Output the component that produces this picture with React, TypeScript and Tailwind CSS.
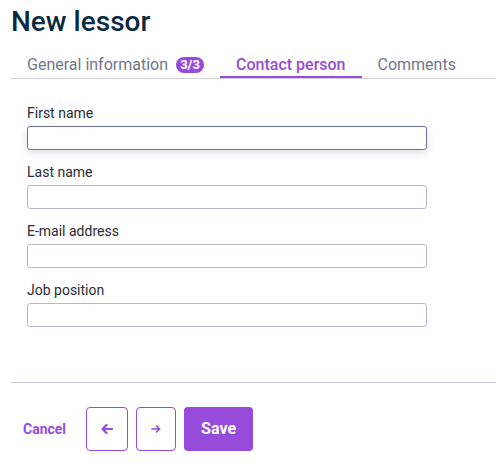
import { useState } from "react"

const fields = ["First name", "Last name", "E-mail address", "Job position"]

const Tab = ({ label, active, badge }: { label: string; active?: boolean; badge?: string }) => (
  <button
    className={`h-[26px] px-4 pt-px flex items-start border-b-2 text-[16px] leading-6 ${
      active ? "border-[#974bdb] text-[#974bdb] font-medium" : "border-transparent text-[#737587]"
    }`}
  >
    {label}
    {badge && (
      <span className="ml-2 mt-[4px] h-4 w-[28px] text-center rounded-full bg-[#974bdb] text-white text-[13px] leading-4 font-bold">
        {badge}
      </span>
    )}
  </button>
)

export default function App() {
  const [focused] = useState(0)
  return (
    <div className="w-[496px] h-[470px] bg-white pl-[11px] pt-1 font-['Roboto',sans-serif]">
      <h1 className="text-[28px] leading-9 font-medium text-[#0b2a3f]">New lessor</h1>
      <div className="mt-3 flex border-b border-[#d3d0de]">
        <Tab label="General information" badge="3/3" />
        <Tab label="Contact person" active />
        <Tab label="Comments" />
      </div>
      <form className="pl-4 pt-6 h-[303px]">
        {fields.map((f, i) => (
          <div key={f} className="mb-3">
            <label className="block text-[14px] leading-5 text-[#2a2b33]">{f}</label>
            <input
              className={`mt-[3px] block w-[400px] h-6 rounded-[3px] border outline-none ${
                i === focused
                  ? "border-[#6e6f9c] shadow-[0_3px_8px_rgba(40,40,80,0.15)]"
                  : "border-[#b9b8d2]"
              }`}
            />
          </div>
        ))}
      </form>
      <div className="border-t border-[#cac6da]" />
      <div className="mt-6 flex items-center">
        <button className="ml-3 text-[14px] font-bold text-[#974bdb]">Cancel</button>
        <button className="ml-5 w-[42px] h-[44px] rounded-[4px] border border-[#974bdb] flex items-center justify-center text-[#974bdb]">
          <svg width="12" height="12" viewBox="0 0 12 12" fill="none" stroke="currentColor" strokeWidth="2.2" strokeLinecap="round" strokeLinejoin="round">
            <path d="M11 6H1.5M5.5 2L1.5 6l4 4" />
          </svg>
        </button>
        <button className="ml-2 w-[40px] h-[44px] rounded-[4px] border border-[#974bdb] flex items-center justify-center text-[#974bdb]">
          <svg width="10" height="10" viewBox="0 0 10 10" fill="none" stroke="currentColor" strokeWidth="1.7" strokeLinecap="round" strokeLinejoin="round">
            <path d="M1 5h7.5M5.5 2l3 3-3 3" />
          </svg>
        </button>
        <button className="ml-2 w-[69px] h-[44px] rounded-[4px] bg-[#974bdb] text-white text-[16px] font-bold">Save</button>
      </div>
    </div>
  )
}
